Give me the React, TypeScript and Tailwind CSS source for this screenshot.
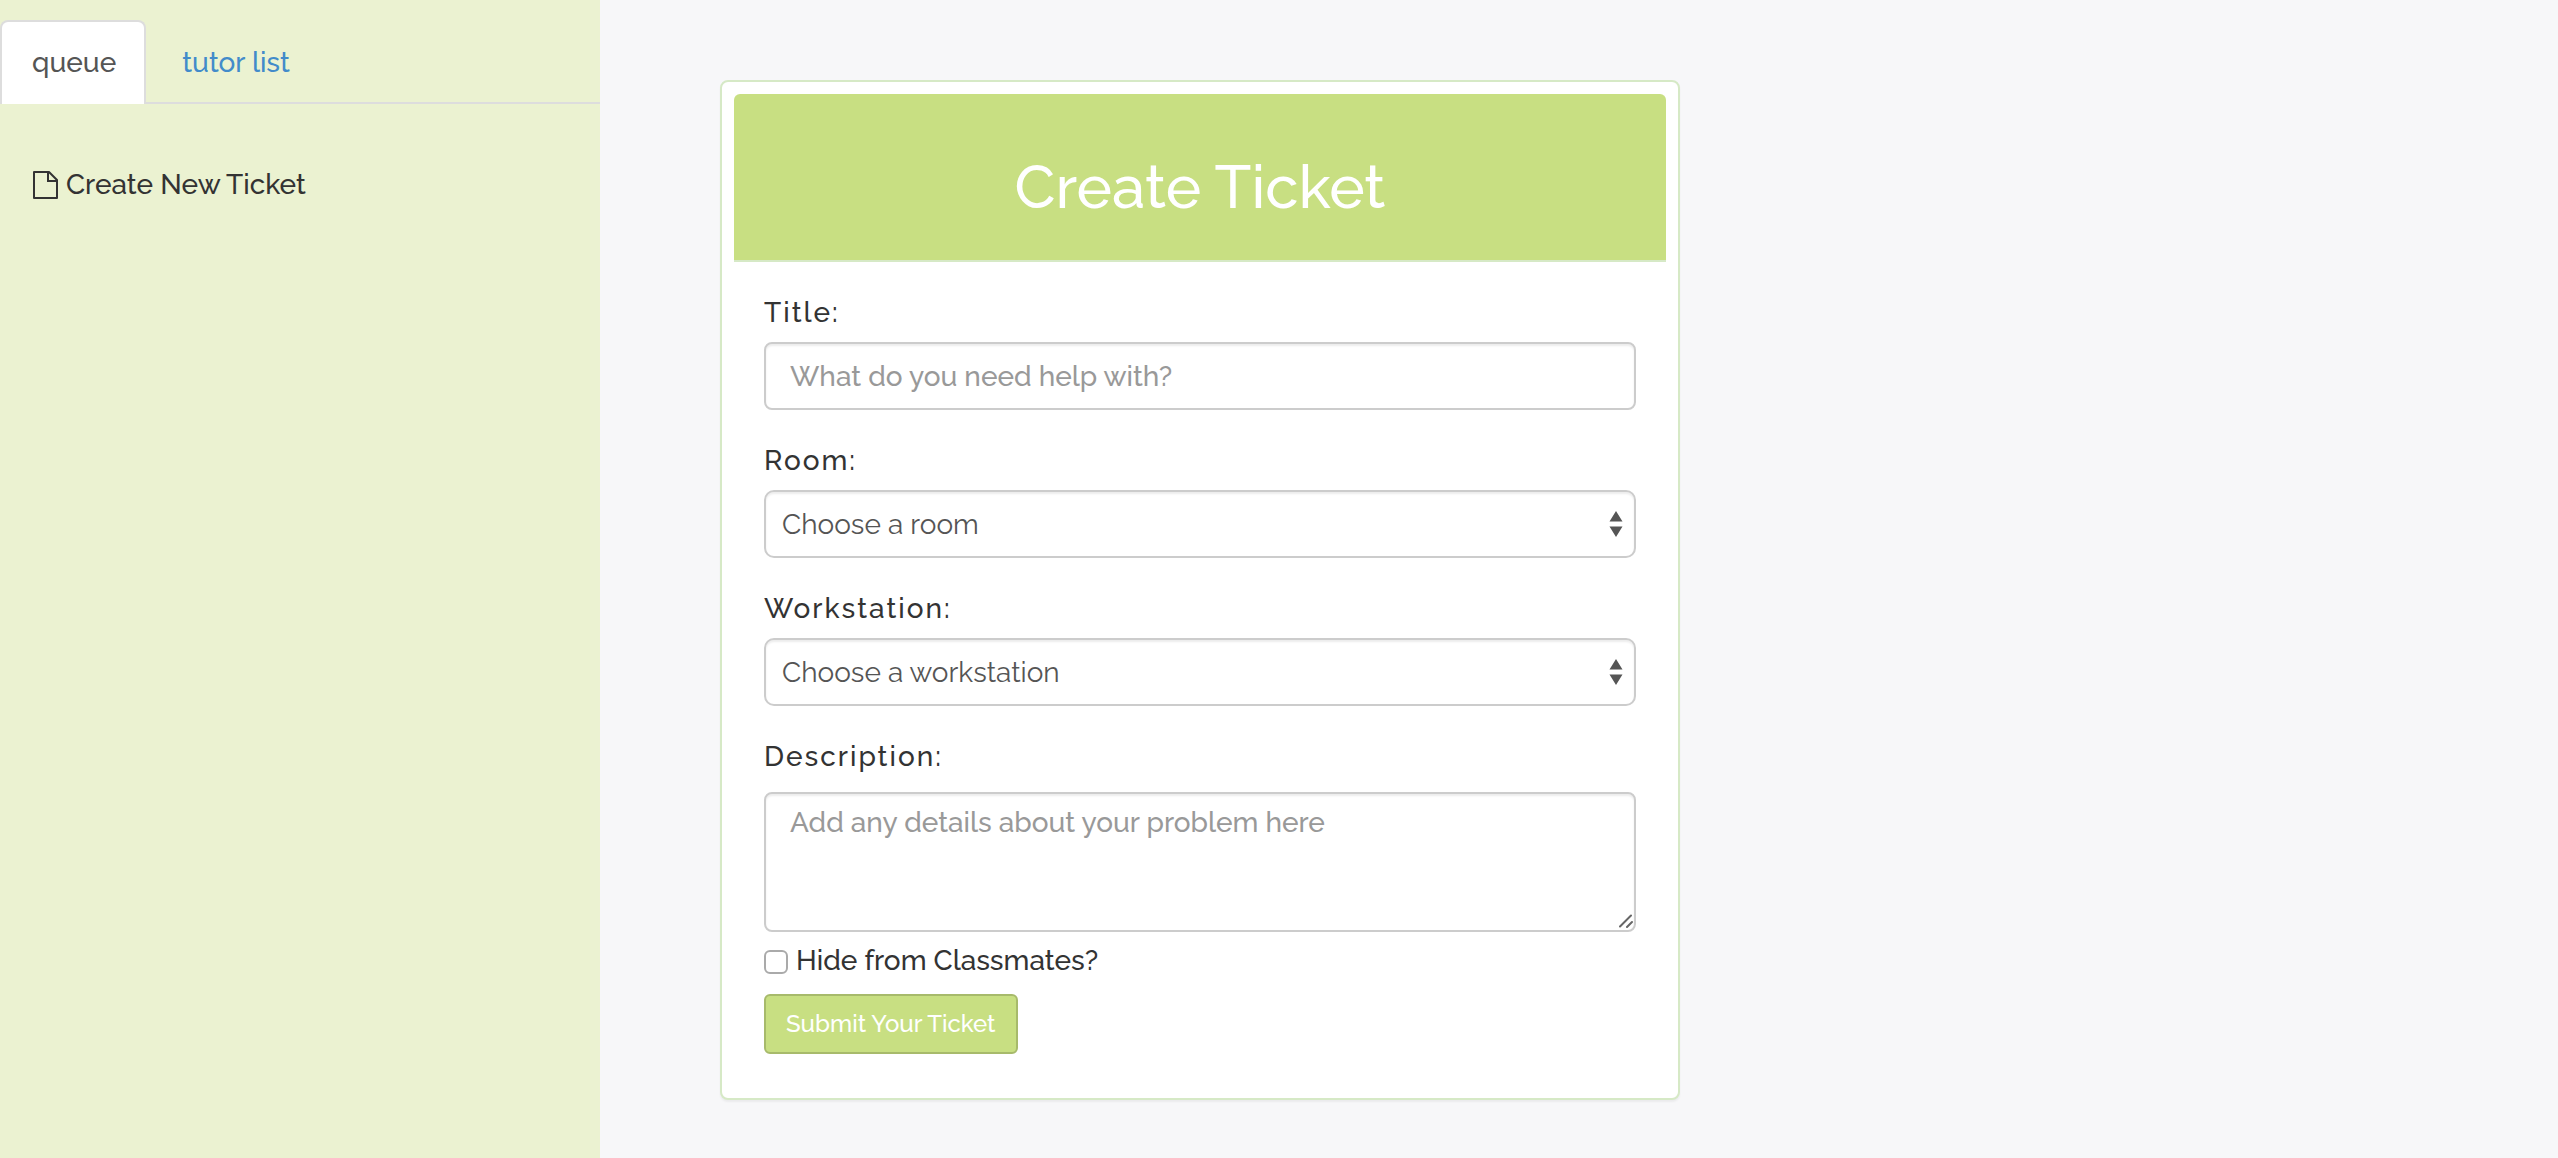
import { useState } from "react";

function FileIcon() {
  return (
    <svg viewBox="0 0 26 30" className="h-[30px] w-[26px]" fill="none" stroke="currentColor" strokeWidth="2" aria-hidden="true">
      <path d="M2 2h15l8 8v18H2z" strokeLinejoin="round" />
      <path d="M16 2v9h9" />
    </svg>
  );
}

function Tabs() {
  return (
    <nav className="flex items-end border-b-2 border-[#ddd] pt-5">
      <a
        href="#queue"
        className="-mb-0.5 rounded-t-lg border-2 border-b-0 border-[#ddd] bg-white pt-[22px] pr-7 pb-[22px] pl-[30px] leading-[38px] text-[#555]"
      >
        queue
      </a>
      <a href="#tutors" className="px-9 pt-[22px] pb-5 leading-[38px] text-[#428bca]">
        tutor list
      </a>
    </nav>
  );
}

function SelectField({ id, label, placeholder }: { id: string; label: string; placeholder: string }) {
  return (
    <div className="mb-[31px]">
      <label htmlFor={id} className="mb-[9px] block tracking-[2px]">
        {label}
      </label>
      <div className="relative">
        <select
          id={id}
          className="block h-[68px] w-full appearance-none rounded-[10px] border-2 border-[#ccc] bg-white px-4 pt-0.5 font-normal text-[#555] shadow-[inset_0_2px_2px_rgba(0,0,0,0.075)]"
        >
          <option>{placeholder}</option>
        </select>
        <svg viewBox="0 0 14 26" className="pointer-events-none absolute top-[21px] right-[13px] h-[26px] w-3.5" fill="#555" aria-hidden="true">
          <path d="M7 0l6.500 10.500h-13zM7 26L.5 15.500h13z" />
        </svg>
      </div>
    </div>
  );
}

export default function App() {
  const [title, setTitle] = useState("");
  const [description, setDescription] = useState("");
  const [hidden, setHidden] = useState(false);

  return (
    <div className="flex min-h-screen bg-[#f7f7f9] font-['Raleway','Lato',sans-serif] text-[28px] leading-10 font-medium text-[#333]">
      <aside className="w-[600px] shrink-0 bg-[#ebf2d1]">
        <Tabs />
        <a href="#new" className="mt-[61px] ml-8 flex items-center gap-2">
          <FileIcon />
          Create New Ticket
        </a>
      </aside>

      <main className="flex-1 px-30 pt-20 pb-14">
        <section className="w-full max-w-[960px] rounded-lg border-2 border-[#d6e9c6] bg-white p-3 shadow-[0_2px_2px_rgba(0,0,0,0.05)]">
          <header className="rounded-t-md border-b-2 border-[#d6e9c6] bg-[#c8df82] px-8 pt-[60px] pb-10">
            <h1 className="text-center text-[60px] leading-[66px] text-white">Create Ticket</h1>
          </header>

          <form onSubmit={(e) => e.preventDefault()} className="px-[30px] pt-[31px] pb-8">
            <div className="mb-[31px]">
              <label htmlFor="title" className="mb-[9px] block tracking-[2px]">
                Title:
              </label>
              <input
                id="title"
                type="text"
                value={title}
                onChange={(e) => setTitle(e.target.value)}
                placeholder="What do you need help with?"
                className="block h-[68px] w-full rounded-lg border-2 border-[#ccc] bg-white px-6 text-[#555] shadow-[inset_0_2px_2px_rgba(0,0,0,0.075)] placeholder:text-[#999]"
              />
            </div>

            <SelectField id="room" label="Room:" placeholder="Choose a room" />
            <SelectField id="workstation" label="Workstation:" placeholder="Choose a workstation" />

            <label htmlFor="description" className="mb-[15px] block tracking-[2px]">
              Description:
            </label>
            <div className="relative">
              <textarea
                id="description"
                value={description}
                onChange={(e) => setDescription(e.target.value)}
                placeholder="Add any details about your problem here"
                className="block h-[140px] w-full resize-none rounded-lg border-2 border-[#ccc] bg-white px-6 py-[9px] text-[#555] shadow-[inset_0_2px_2px_rgba(0,0,0,0.075)] placeholder:text-[#999]"
              />
              <svg viewBox="0 0 14 14" className="pointer-events-none absolute right-[3px] bottom-1 size-3.5" fill="none" stroke="#666" strokeWidth="2" strokeLinecap="round" aria-hidden="true">
                <path d="M1 12.500L12 1.500M8 13l5-5" />
              </svg>
            </div>

            <label className="mt-[9px] flex items-center gap-2">
              <input
                type="checkbox"
                checked={hidden}
                onChange={(e) => setHidden(e.target.checked)}
                className="mt-0.5 size-6 appearance-none rounded-md border-2 border-[#aaa] bg-white checked:bg-[#428bca]"
              />
              Hide from Classmates?
            </label>

            <button
              type="submit"
              className="mt-[13px] block h-[60px] rounded-md border-2 border-[#a7ba6b] bg-[#c8df82] px-5 text-2xl text-white"
            >
              Submit Your Ticket
            </button>
          </form>
        </section>
      </main>
    </div>
  );
}
